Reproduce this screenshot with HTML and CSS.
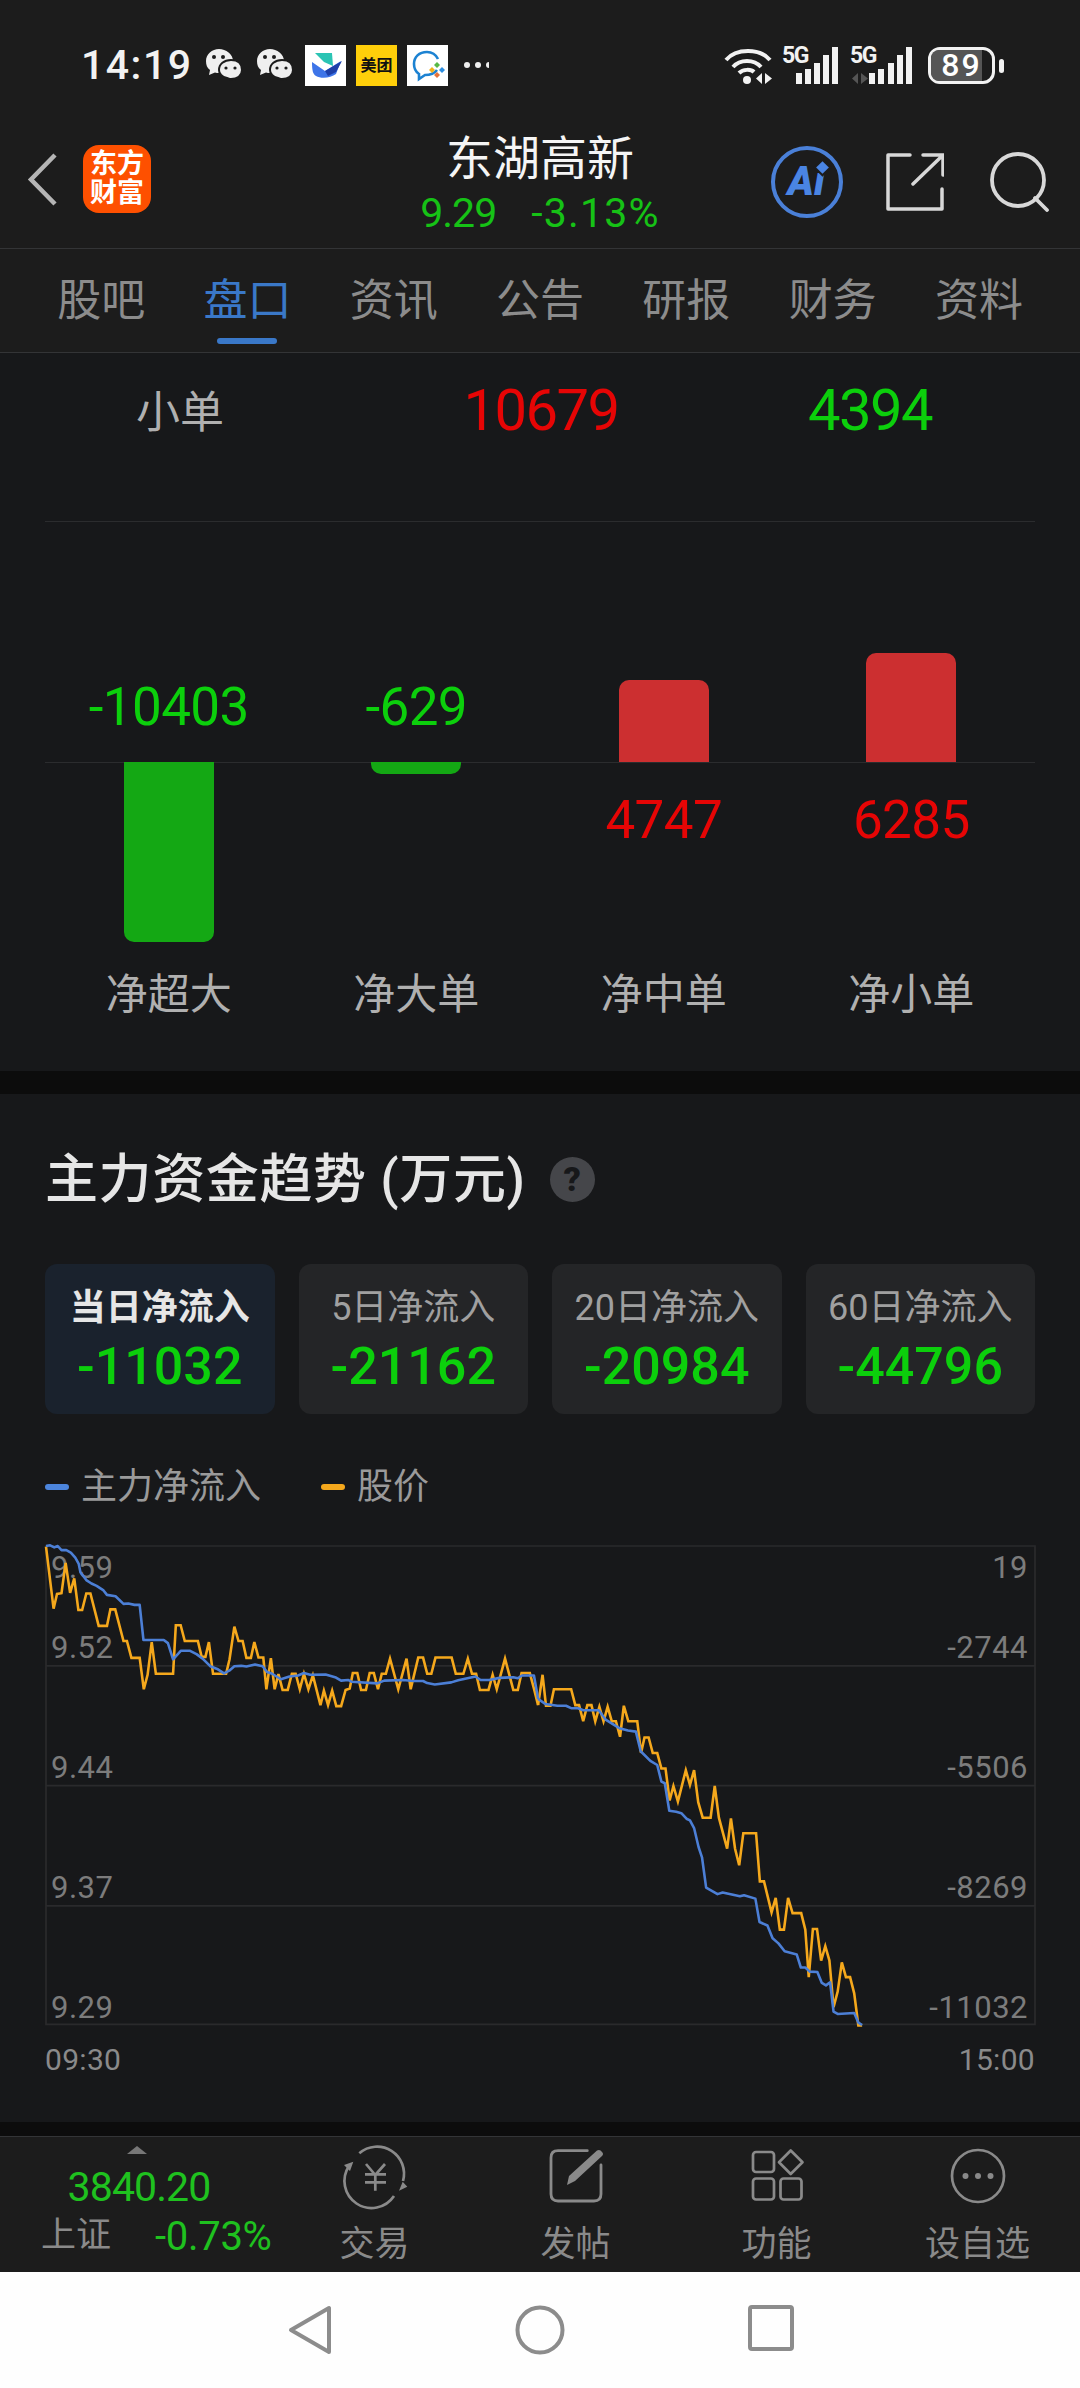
FILE: index.html
```html
<!DOCTYPE html>
<html lang="zh">
<head>
<meta charset="utf-8">
<title>东湖高新</title>
<link rel="stylesheet" href="styles.css">
</head>
<body>
<svg class="defs" width="0" height="0" aria-hidden="true">
  <symbol id="wechat" viewBox="0 0 37 32">
    <path d="M1 12C1 5 7 0 14 0s14 5 14 12-6 12-14 12c-1 0-3 0-4-.5L4 26l1-5C2 19 1 16 1 12z" fill="#efefef"/>
    <path d="M14 21c0-6 5-10 12-10s11 4 11 10-5 9-11 9l-1 0 5 2-8-3c-4-1-8-3-8-8z" fill="#efefef" stroke="#1c1c1c" stroke-width="2"/>
    <circle cx="9" cy="8" r="2" fill="#1c1c1c"/><circle cx="18" cy="8" r="2" fill="#1c1c1c"/>
    <circle cx="21" cy="19" r="1.6" fill="#1c1c1c"/><circle cx="30" cy="19" r="1.6" fill="#1c1c1c"/>
  </symbol>
</svg>
<div class="page">
  <header class="top">
    <div class="status">
      <span class="time">14:19</span>
      <svg class="wx first" width="37" height="32"><use href="#wechat"/></svg>
      <svg class="wx" width="37" height="32"><use href="#wechat"/></svg>
      <span class="tile">
        <svg width="41" height="41" viewBox="0 0 41 41"><path d="M10 8h17l1 13-9-4z" fill="#2bc4b4"/><path d="M7 17l13 9 16-10-5 13c-5 4-15 5-20 2-3-2-4-5-4-14z" fill="#3d74e8"/><path d="M20 26l17-10-6 11-8 4z" fill="#1d3fa8"/></svg>
      </span>
      <span class="tile yellow">美团</span>
      <span class="tile">
        <svg width="41" height="41" viewBox="0 0 41 41"><path d="M20 7c-8 0-13 5-13 12 0 5 2 8 5 10v5l6-4c5 0 9-1 12-5" fill="none" stroke="#1c82d2" stroke-width="2.600"/><path d="M20 7c5 0 9 3 11 7" fill="none" stroke="#1c82d2" stroke-width="2.600"/><path d="M30 17l3 3-3 3-3-3z" fill="#58b947"/><path d="M25 22l3 3-3 3-3-3z" fill="#f2b21c"/><path d="M35 22l3 3-3 3-3-3z" fill="#2c8ee0"/><path d="M30 27l3 3-3 3-3-3z" fill="#e4733a"/></svg>
      </span>
      <span class="dots"><i></i><i></i><i class="clip"></i></span>
      <span class="status-right">
        <svg class="wifi" width="48" height="37" viewBox="0 0 48 37">
          <path d="M2 13C12 1 36 1 46 13" fill="none" stroke="#f2f2f2" stroke-width="4"/>
          <path d="M9 20c7-8 21-8 28 0" fill="none" stroke="#f2f2f2" stroke-width="4"/>
          <path d="M15 26c4-4 12-4 15-1" fill="none" stroke="#f2f2f2" stroke-width="4"/>
          <circle cx="23" cy="33" r="4" fill="#f2f2f2"/>
          <path d="M38 26v11l-6-5.500zM41 26v11l7-5.500z" fill="#f2f2f2"/>
        </svg>
        <span class="signal">
          <span class="fiveg">5G</span>
          <svg width="57" height="37" viewBox="0 0 57 37"><path d="M14 26h6v11h-6zM23 22h6v15h-6zM32 16h6v21h-6zM41 8h6v29h-6zM50 0h6v37h-6z" fill="#f2f2f2"/></svg>
        </span>
        <span class="signal">
          <span class="fiveg">5G</span>
          <svg width="62" height="37" viewBox="0 0 62 37"><path d="M8 26v11l-6-5.500zM11 26v11l7-5.500z" fill="#555"/><path d="M19 26h6v11h-6zM28 22h6v15h-6zM38 16h6v21h-6zM47 8h6v29h-6zM56 0h6v37h-6z" fill="#f2f2f2"/></svg>
        </span>
        <span class="battery"><span class="battery-fill"></span><span class="battery-num">89</span></span>
      </span>
    </div>
    <div class="nav">
      <div class="nav-left">
        <svg width="33" height="55" viewBox="0 0 33 55"><path d="M29 3L5 27.500 29 52" fill="none" stroke="#b5b5b5" stroke-width="4.500"/></svg>
        <span class="logo"><span>东方</span><span>财富</span></span>
      </div>
      <div class="nav-title">
        <div class="name">东湖高新</div>
        <div class="quote"><span>9.29</span><span>-3.13%</span></div>
      </div>
      <div class="nav-right">
        <span class="ai"><span class="ai-text">Ai</span><span class="ai-star"></span></span>
        <svg class="share" width="58" height="58" viewBox="0 0 58 58"><path d="M24 2H2v54h54V36" fill="none" stroke="#d8d8d8" stroke-width="3.500" stroke-linejoin="round" stroke-linecap="round"/><path d="M27 31L57 2M37 2h20v20" fill="none" stroke="#d8d8d8" stroke-width="3.500" stroke-linecap="round"/></svg>
        <svg class="search" width="60" height="60" viewBox="0 0 60 60"><circle cx="28" cy="28" r="26" fill="none" stroke="#d8d8d8" stroke-width="3.800"/><path d="M45 46l12 12" stroke="#d8d8d8" stroke-width="3.800" stroke-linecap="round"/></svg>
      </div>
    </div>
  </header>

  <nav class="tabs">
    <span class="tab">股吧</span>
    <span class="tab active">盘口</span>
    <span class="tab">资讯</span>
    <span class="tab">公告</span>
    <span class="tab">研报</span>
    <span class="tab">财务</span>
    <span class="tab">资料</span>
  </nav>

  <section class="flow">
    <div class="flow-row">
      <span class="flow-name">小单</span>
      <span class="big red">10679</span>
      <span class="big green">4394</span>
    </div>
    <div class="bars">
      <div class="bar-col">
        <div class="up"><span class="val green over">-10403</span></div>
        <div class="down"><div class="bar bar-neg tall-1"></div></div>
        <div class="bar-label">净超大</div>
      </div>
      <div class="bar-col">
        <div class="up"><span class="val green over">-629</span></div>
        <div class="down"><div class="bar bar-neg tall-2"></div></div>
        <div class="bar-label">净大单</div>
      </div>
      <div class="bar-col">
        <div class="up"><div class="bar bar-pos tall-3"></div></div>
        <div class="down"><span class="val red under">4747</span></div>
        <div class="bar-label">净中单</div>
      </div>
      <div class="bar-col">
        <div class="up"><div class="bar bar-pos tall-4"></div></div>
        <div class="down"><span class="val red under">6285</span></div>
        <div class="bar-label">净小单</div>
      </div>
    </div>
  </section>

  <section class="trend">
    <div class="trend-title"><h2>主力资金趋势 (万元)</h2><span class="help">?</span></div>
    <div class="cards">
      <div class="card current"><div class="card-label">当日净流入</div><div class="card-val">-11032</div></div>
      <div class="card"><div class="card-label">5日净流入</div><div class="card-val">-21162</div></div>
      <div class="card"><div class="card-label">20日净流入</div><div class="card-val">-20984</div></div>
      <div class="card"><div class="card-label">60日净流入</div><div class="card-val">-44796</div></div>
    </div>
    <div class="legend">
      <span class="key"><i class="dash blue"></i>主力净流入</span>
      <span class="key"><i class="dash orange"></i>股价</span>
    </div>
    <div class="chart">
      <svg class="plot" width="989" height="479" viewBox="133 76 2872 1391">
        <g fill="none" stroke="#2a2a2c" stroke-width="5">
          <path d="M133 76H3005V1465H133zM133 424H3005M133 772H3005M133 1121H3005"/>
        </g>
        <g fill="none" stroke="#f5a81c" stroke-width="7.500" stroke-linejoin="miter">
          <polyline points="133,78 155,258 165,215 178,213 190,125 203,212 215,170 227,262 238,262 250,214 262,214 286,308 310,308 320,260 334,260 358,352 368,352 381,401 405,401 417,492 428,450 440,355 452,447 502,447 510,306 524,306 536,352 574,352 585,398 596,398 606,355 618,447 656,447 666,405 680,310 692,352 704,352 715,401 728,401 738,355 750,400 764,400 773,492 786,402 797,492 808,448 820,494 835,494 847,447 858,447 870,492 882,447 895,492 908,452 930,538 940,496 952,538 964,496 976,541 990,541 1003,494 1015,490 1024,445 1037,445 1048,494 1062,494 1073,445 1085,445 1097,492 1108,447 1120,447 1132,403 1156,492 1180,403 1192,492 1214,400 1228,400 1240,447 1252,447 1264,400 1311,400 1323,447 1345,447 1358,403 1370,447 1382,447 1393,494 1418,494 1430,450 1442,492 1466,403 1490,494 1503,494 1514,445 1538,445 1550,490 1562,538"/>
          <polyline transform="translate(1568 0)" points="-6,538 7,450 17,540 30,540 40,492 90,492 102,538 113,538 125,585 137,538 149,538 160,585 172,543 184,585 196,543 208,585 220,585 232,630 243,540 256,585 282,585 293,677 303,632 315,632 327,677 340,677 352,722 364,722 376,815 387,773 400,818 423,727 435,770 447,727 459,820 472,865 495,865 507,773 519,865 543,955 554,867 566,955 578,1003 590,910 627,910 638,1050 650,1050 672,1140 684,1098 696,1190 708,1190 720,1098 733,1142 758,1142 770,1190 780,1328 792,1188 804,1188 816,1280 828,1238 840,1280 852,1415 864,1370 876,1285 888,1328 900,1328 912,1375 924,1468 935,1468"/>
        </g>
        <g fill="none" stroke="#4c7fd6" stroke-width="7.500" stroke-linejoin="round">
          <polyline points="133,76 145,74 157,80 167,76 178,88 192,88 205,95 218,110 228,128 233,152 250,175 265,185 280,192 300,205 310,218 335,222 358,244 372,243 390,247 405,247 416,349 475,349 487,358 502,405 525,380 550,380 570,390 590,405 610,425 630,433 650,446 665,438 680,425 700,424 715,426 740,420 762,425 775,442 790,447 815,463 840,455 865,452 882,445 900,450 945,449 975,458 990,467 1010,465 1020,470 1095,475 1115,467 1170,465 1200,468 1228,468 1240,474 1262,478 1310,472 1330,466 1380,455 1395,465 1420,465 1450,459 1490,457 1503,460 1515,452 1550,452 1562,520"/>
          <polyline transform="translate(1568 0)" points="-6,520 15,535 50,540 75,540 90,547 110,547 125,553 170,553 190,580 230,605 255,612 278,615 292,672 320,700 340,712 352,760 362,765 375,845 395,848 410,852 425,868 435,873 447,895 460,950 470,980 482,1068 515,1087 530,1082 580,1093 592,1090 625,1100 637,1168 660,1178 675,1215 692,1230 710,1253 745,1262 757,1300 770,1300 783,1312 805,1313 818,1345 830,1352 842,1343 852,1428 864,1435 912,1432 924,1460 935,1467"/>
        </g>
      </svg>
      <div class="axis axis-left">
        <span class="first-tick">9.59</span><span>9.52</span><span>9.44</span><span>9.37</span><span>9.29</span>
      </div>
      <div class="axis axis-right">
        <span class="first-tick">19</span><span>-2744</span><span>-5506</span><span>-8269</span><span>-11032</span>
      </div>
    </div>
    <div class="times"><span>09:30</span><span>15:00</span></div>
  </section>

  <div class="band"></div>

  <footer class="dock">
    <div class="index">
      <span class="caret"></span>
      <div class="index-val">3840.20</div>
      <div class="index-row"><span class="index-name">上证</span><span class="index-pct">-0.73%</span></div>
    </div>
    <div class="dock-item">
      <svg width="66" height="56" viewBox="0 0 66 56" fill="none" stroke="#8a8a8a" stroke-width="2.700">
        <path d="M17.300 5.300A27 27 0 0 1 61 33"/>
        <path d="M7 18A27 27 0 0 0 52 48"/>
        <path d="M2 17l9.300-3.300L8 23zM65.300 38.700L57 42.700l3.700-9z" fill="#8a8a8a" stroke="none"/>
        <path d="M24 16l9.300 11 9.700-11M33.300 27v15.700M23 26.300h21M23 34.300h21"/>
      </svg>
      <span>交易</span>
    </div>
    <div class="dock-item">
      <svg width="56" height="56" viewBox="0 0 56 56" fill="none" stroke="#8a8a8a" stroke-width="2.800">
        <path d="M39.300 2.700H10C5.500 2.700 3 5.200 3 9.700V46c0 4.500 2.500 7 7 7h36c4.500 0 7-2.500 7-7V17" stroke-linecap="round"/>
        <path d="M19 37l2-9L49 2.500Q52 1 54 4q2 2 0 4L27 33z" fill="#8a8a8a" stroke="none"/>
      </svg>
      <span>发帖</span>
    </div>
    <div class="dock-item">
      <svg width="56" height="56" viewBox="0 0 56 56" fill="none" stroke="#8a8a8a" stroke-width="2.700">
        <rect x="4" y="4" width="21" height="20" rx="3"/>
        <path d="M41.700 2.500L53.500 14.300 41.700 26 30 14.300z" stroke-linejoin="round"/>
        <rect x="4" y="30.500" width="21" height="21" rx="3"/>
        <rect x="31.500" y="30.500" width="21" height="21" rx="3"/>
      </svg>
      <span>功能</span>
    </div>
    <div class="dock-item">
      <svg width="56" height="56" viewBox="0 0 56 56" fill="none" stroke="#8a8a8a" stroke-width="2.700">
        <circle cx="28" cy="28" r="26"/>
        <circle cx="15.500" cy="28" r="3" fill="#8a8a8a" stroke="none"/><circle cx="28" cy="28" r="3" fill="#8a8a8a" stroke="none"/><circle cx="40.500" cy="28" r="3" fill="#8a8a8a" stroke="none"/>
      </svg>
      <span>设自选</span>
    </div>
  </footer>

  <div class="sysnav">
    <svg width="44" height="50" viewBox="0 0 44 50" fill="none" stroke="#8c8c8c" stroke-width="4" stroke-linejoin="round"><path d="M41 3v44L3 25z"/></svg>
    <svg width="50" height="50" viewBox="0 0 50 50" fill="none" stroke="#8c8c8c" stroke-width="4"><circle cx="25" cy="25" r="22.500"/></svg>
    <svg width="46" height="46" viewBox="0 0 46 46" fill="none" stroke="#8c8c8c" stroke-width="4" stroke-linejoin="round"><rect x="2" y="2" width="42" height="42" rx="2"/></svg>
  </div>
</div>
</body>
</html>
```

FILE: styles.css
```css
* { box-sizing: border-box; }
html, body { margin: 0; padding: 0; background: #0c0c0c; }
body { font-family: Roboto, "Noto Sans CJK SC", sans-serif; }
.defs { position: absolute; }
.page { width: 1080px; height: 2388px; overflow: hidden; display: flex; flex-direction: column; }

.top { background: #1c1c1c; height: 249px; border-bottom: 1px solid #333436; }
.status { height: 130px; display: flex; align-items: center; padding: 0 85px 0 81px; color: #f2f2f2; }
.time { font-size: 41px; font-weight: 500; letter-spacing: 1.5px; width: 124px; line-height: 40px; }
.wx { margin-right: 14px; flex: none; }
.wx + .wx { margin-right: 12px; }
.tile { width: 41px; height: 41px; margin-right: 10px; background: #fff; display: flex; align-items: center; justify-content: center; flex: none; }
.tile.yellow { background: #ffcf0a; color: #111; font-size: 16px; font-weight: 700; line-height: 41px; }
.dots { display: flex; gap: 5px; margin-left: 6px; align-items: center; }
.dots i { width: 6px; height: 6px; border-radius: 50%; background: #eee; }
.dots i.clip { width: 3px; border-radius: 3px 0 0 3px; }
.status-right { margin-left: auto; display: flex; align-items: center; }
.wifi { margin-right: 10px; }
.signal { position: relative; display: block; height: 37px; margin-right: 10px; }
.signal svg { display: block; }
.signal + .signal { margin-right: 16px; margin-left: 1px; }
.fiveg { position: absolute; left: 0; top: -3px; font-size: 23px; font-weight: 700; letter-spacing: -1.5px; line-height: 23px; color: #f2f2f2; }
.battery { position: relative; width: 67px; height: 37px; border: 3px solid #f2f2f2; border-radius: 12px; display: flex; align-items: center; justify-content: center; }
.battery::after { content: ""; position: absolute; right: -12px; top: 9px; width: 5px; height: 14px; background: #f2f2f2; border-radius: 3px; }
.battery-fill { position: absolute; left: 0; top: 0; bottom: 0; width: 51px; background: #555; border-radius: 8px 0 0 8px; }
.battery-num { position: relative; font-size: 32px; line-height: 31px; font-weight: 500; letter-spacing: 2px; color: #fff; }

.nav { display: grid; grid-template-columns: 1fr auto 1fr; height: 118px; }
.nav-left { display: flex; align-items: center; padding: 0 0 20px 26px; }
.logo { width: 68px; height: 68px; margin-left: 24px; border-radius: 16px; background: #fe5000; color: #fff; font-size: 27px; font-weight: 700; line-height: 29px; display: flex; flex-direction: column; align-items: center; justify-content: center; }
.nav-title { text-align: center; padding-top: 1px; }
.name { font-size: 47px; line-height: 56px; color: #f5f5f5; }
.quote { font-size: 41px; line-height: 46px; color: #16c216; display: flex; gap: 35px; justify-content: center; margin-top: 3px; }
.quote span:first-child { letter-spacing: -1px; }
.quote span:last-child { letter-spacing: 1.2px; }
.nav-right { display: flex; align-items: flex-start; justify-content: flex-end; padding-right: 30px; padding-top: 16px; }
.ai { position: relative; width: 72px; height: 72px; border: 4px solid #4a80d8; border-radius: 50%; display: flex; align-items: center; justify-content: center; }
.ai-text { font-size: 40px; font-weight: 900; font-style: italic; color: #4a85e4; line-height: 40px; margin-left: -2px; }
.ai-star { position: absolute; left: 43px; top: 13px; width: 9px; height: 9px; background: #4a85e4; transform: rotate(45deg); box-shadow: 0 0 0 2px #1c1c1c; }
.share { margin: 7px 0 0 43px; }
.search { margin: 6px 0 0 46px; }

.tabs { background: #1c1c1c; height: 104px; border-bottom: 1px solid #333436; display: grid; grid-template-columns: repeat(7, 146.3px); padding-left: 28px; }
.tab { position: relative; font-size: 44px; line-height: 104px; height: 103px; color: #8c8c8c; text-align: center; padding-bottom: 2px; }
.tab.active { color: #3a78c8; }
.tab.active::after { content: ""; position: absolute; left: 43px; bottom: 8px; width: 60px; height: 6px; border-radius: 3px; background: #3a78c8; }

.flow { background: #17181a; height: 718px; padding: 0 45px; }
.flow-row { height: 169px; border-bottom: 1px solid #2b2c2e; display: grid; grid-template-columns: 270px 452px 206px; padding-top: 27px; text-align: center; align-items: start; }
.flow-name { font-size: 44px; line-height: 60px; color: #b0b0b0; padding-top: 3px; }
.big { font-size: 58px; line-height: 60px; letter-spacing: -1.6px; }
.red { color: #e60505; }
.green { color: #0ccf0c; }
.bars { display: grid; grid-template-columns: repeat(4, 1fr); }
.bar-col { display: flex; flex-direction: column; align-items: stretch; text-align: center; }
.up { height: 240px; display: flex; flex-direction: column; justify-content: flex-end; align-items: center; }
.down { height: 209px; border-top: 1px solid #2b2c2e; display: flex; flex-direction: column; align-items: center; }
.val { font-size: 53px; line-height: 48px; letter-spacing: -.6px; }
.over { margin-bottom: 31px; }
.under { margin-top: 33px; }
.bar { width: 90px; }
.bar-neg { background: #14a814; border-radius: 0 0 10px 10px; margin-top: -1px; }
.bar-pos { background: #cc2f30; border-radius: 10px 10px 0 0; }
.tall-1 { height: 180px; }
.tall-2 { height: 12px; }
.tall-3 { height: 82px; }
.tall-4 { height: 109px; }
.bar-label { font-size: 42px; line-height: 48px; color: #b0b0b0; }

.trend { margin-top: 23px; background: #17181a; height: 1028px; padding: 60px 45px 0; }
.trend-title { display: flex; align-items: center; height: 52px; }
.trend-title h2 { margin: 0; font-size: 53px; line-height: 52px; font-weight: 500; color: #e6e6e6; letter-spacing: .6px; }
.help { width: 45px; height: 45px; margin-left: 24px; border-radius: 50%; background: #45464a; color: #17181a; font-size: 34px; font-weight: 900; line-height: 45px; text-align: center; transform: translateY(-1px); }
.cards { margin-top: 58px; display: grid; grid-template-columns: repeat(4, 1fr); gap: 24px; }
.card { height: 150px; border-radius: 12px; background: #242527; padding-top: 22px; text-align: center; }
.card.current { background: #1a222d; }
.card-label { font-size: 36px; line-height: 44px; color: #a0a0a0; }
.current .card-label { color: #e6e6e6; font-weight: 700; }
.card-val { margin-top: 9px; font-size: 52px; font-weight: 500; line-height: 56px; color: #0ccf0c; }
.legend { margin-top: 53px; height: 40px; display: flex; gap: 60px; font-size: 36px; line-height: 40px; color: #9a9a9a; }
.key { display: flex; align-items: center; }
.dash { width: 24px; height: 6px; border-radius: 3px; margin-right: 12px; }
.dash.blue { background: #4c85dd; }
.dash.orange { background: #f5a81c; }
.chart { position: relative; margin: 39px 0 0 1px; width: 989px; height: 479px; }
.plot { display: block; overflow: visible; position: relative; z-index: 1; }
.axis { position: absolute; top: 3px; display: flex; flex-direction: column; gap: 82px; font-size: 31px; line-height: 38px; color: #7c7c7c; letter-spacing: .5px; }
.axis span { display: block; }
.axis .first-tick { margin-bottom: -40px; }
.axis-left { left: 5px; }
.axis-right { right: 7px; text-align: right; }
.times { margin-top: 17px; display: flex; justify-content: space-between; font-size: 30px; line-height: 36px; color: #8a8a8a; letter-spacing: .3px; }

.band { height: 15px; flex: none; background: #0c0c0c; border-bottom: 1px solid #333436; }

.dock { flex: none; height: 135px; background: #1c1c1c; display: grid; grid-template-columns: 274px repeat(4, 201px); color: #8a8a8a; }
.index { position: relative; text-align: center; }
.caret { position: absolute; left: 127px; top: 9px; border: 10.500px solid transparent; border-top: 0; border-bottom: 8px solid #777; }
.index-val { margin-top: 28px; font-size: 41px; line-height: 44px; color: #1fc11f; letter-spacing: -.9px; margin-left: -2px; width: 282px; }
.index-row { margin-top: 2px; padding-left: 41px; display: flex; gap: 44px; align-items: center; height: 50px; }
.index-name { font-size: 35px; line-height: 46px; }
.index-pct { font-size: 40px; line-height: 46px; color: #1fc11f; letter-spacing: -.3px; padding-top: 2px; }
.dock-item { display: flex; flex-direction: column; align-items: center; padding-top: 11px; font-size: 35px; line-height: 46px; }
.dock-item svg { display: block; margin-bottom: 18px; overflow: visible; }

.sysnav { flex: none; height: 116px; background: #fefefe; display: grid; grid-template-columns: 44px 50px 46px; column-gap: 183px; justify-content: start; padding: 33px 0 0 288px; }
```
